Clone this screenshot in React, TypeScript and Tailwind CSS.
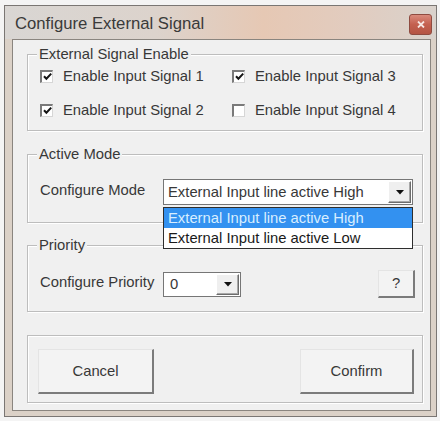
import React from "react";

// Small classic Windows-style controls for the dialog.

const DownArrow = () => (
  <svg width="8" height="5" viewBox="0 0 8 5" aria-hidden="true">
    <path d="M0 0H8L4 4.5Z" fill="#111" />
  </svg>
);

function CheckBox({ checked }: { checked: boolean }) {
  return (
    <span className="w-[13px] h-[13px] shrink-0 bg-white flex items-center justify-center border-t-2 border-l-2 border-r border-b border-t-[#7a7a7a] border-l-[#7a7a7a] border-r-[#d6d6d6] border-b-[#d6d6d6]">
      {checked && (
        <svg width="9" height="9" viewBox="0 0 9 9" aria-hidden="true">
          <path d="M1 4.3 L3.4 6.8 L8.2 1.6" fill="none" stroke="#151515" strokeWidth="2" />
        </svg>
      )}
    </span>
  );
}

function DropButton() {
  return (
    <span className="h-full w-[23px] shrink-0 flex items-center justify-center bg-[#efefef] border-t border-l border-r border-b border-t-white border-l-white border-r-[#6c6c6c] border-b-[#6c6c6c] shadow-[inset_-1px_-1px_0_#a8a8a8]">
      <DownArrow />
    </span>
  );
}

function Group({
  legend,
  className,
  children,
}: {
  legend?: string;
  className: string;
  children: React.ReactNode;
}) {
  return (
    <div
      className={`relative border border-[#bdbdbd] shadow-[inset_1px_1px_0_#ffffff,1px_1px_0_#ffffff] ${className}`}
    >
      {legend && (
        <span className="absolute left-[9px] -top-[10px] bg-[#f0f0f0] px-[2px] leading-[18px] whitespace-nowrap">
          {legend}
        </span>
      )}
      {children}
    </div>
  );
}

function CheckRow({ label, checked }: { label: string; checked: boolean }) {
  return (
    <div className="flex items-center gap-[10px] h-[20px] leading-[20px] whitespace-nowrap">
      <CheckBox checked={checked} />
      <span>{label}</span>
    </div>
  );
}

function PushButton({ label, className }: { label: string; className: string }) {
  return (
    <button
      className={`flex items-center justify-center bg-[#f3f3f3] border-t border-l border-r-2 border-b-2 border-t-[#e4e4e4] border-l-[#e4e4e4] border-r-[#7b7b7b] border-b-[#7b7b7b] text-[#383838] ${className}`}
    >
      {label}
    </button>
  );
}

export default function App() {
  return (
    <div className="w-[440px] h-[421px] overflow-hidden bg-[#f4f4f4] pt-[5px] pl-[4px] font-['Liberation_Sans',Arial,sans-serif] text-[14.8px] text-[#383838]">
      {/* window frame */}
      <div className="w-[433px] h-[412px] border border-[#7a7673] bg-[#dbd1c7] flex flex-col">
        {/* title bar */}
        <div className="h-[33px] shrink-0 flex items-center justify-between pl-[10px] pr-[4px] pt-[3px] bg-[linear-gradient(90deg,#d9d6d3_0%,#dcd3cc_35%,#e6c8b4_60%,#e2ccbf_80%,#d9d2cc_100%)]">
          <span className="text-[16.7px] leading-[20px] text-[#3a3a3a] whitespace-nowrap">
            Configure External Signal
          </span>
          <span className="w-[23px] h-[21px] rounded-[3px] border border-[#8f4b40] bg-[linear-gradient(180deg,#d98a7c_0%,#c4604f_50%,#b45443_100%)] flex items-center justify-center">
            <svg width="8" height="7" viewBox="0 0 8 7" aria-hidden="true">
              <path d="M1 0.5 L7 6.5 M7 0.5 L1 6.5" stroke="#f6e6e2" strokeWidth="1.8" />
            </svg>
          </span>
        </div>

        {/* client area */}
        <div className="ml-[7px] w-[419px] h-[372px] border border-[#8a857f] bg-[#f0f0f0] flex flex-col">
          {/* External Signal Enable */}
          <Group legend="External Signal Enable" className="mt-[14px] ml-[14px] w-[396px] h-[77px] pt-[11px] pl-[12px]">
            <div className="grid grid-cols-[192px_1fr] gap-y-[14px]">
              <CheckRow label="Enable Input Signal 1" checked />
              <CheckRow label="Enable Input Signal 3" checked />
              <CheckRow label="Enable Input Signal 2" checked />
              <CheckRow label="Enable Input Signal 4" checked={false} />
            </div>
          </Group>

          {/* Active Mode */}
          <Group legend="Active Mode" className="mt-[23px] ml-[14px] w-[396px] h-[69px] pt-[24px] pl-[12px] z-10">
            <div className="flex items-center">
              <span className="w-[123px] -mt-[3px] whitespace-nowrap">Configure Mode</span>
              <div className="relative h-[26px] w-[250px] bg-white border border-[#767676] p-[1px] flex">
                <span className="flex-1 flex items-center pl-[3px] whitespace-nowrap">
                  External Input line active High
                </span>
                <DropButton />
                {/* open list */}
                <div className="absolute -left-px top-[27px] w-[250px] bg-white border border-[#2e2e2e] flex flex-col">
                  <span className="h-[20px] leading-[20px] pl-[4px] bg-[#3391f0] text-[#d8eeff] whitespace-nowrap">
                    External Input line active High
                  </span>
                  <span className="h-[20px] leading-[20px] pl-[4px] text-[#1a1a1a] whitespace-nowrap">
                    External Input line active Low
                  </span>
                </div>
              </div>
            </div>
          </Group>

          {/* Priority */}
          <Group legend="Priority" className="mt-[22px] ml-[14px] w-[396px] h-[67px] pt-[24px] pl-[12px] pr-[7px]">
            <div className="flex items-center h-[28px]">
              <span className="w-[123px] -mt-[4px] whitespace-nowrap">Configure Priority</span>
              <div className="h-[25px] w-[78px] bg-white border border-[#767676] p-[1px] flex">
                <span className="flex-1 flex items-center pl-[5px]">0</span>
                <DropButton />
              </div>
              <div className="flex-1" />
              <PushButton label="?" className="w-[37px] h-[28px]" />
            </div>
          </Group>

          {/* actions */}
          <Group className="mt-[23px] ml-[14px] w-[396px] h-[68px] pt-[13px] pl-[10px] pr-[8px]">
            <div className="flex justify-between">
              <PushButton label="Cancel" className="w-[116px] h-[45px]" />
              <PushButton label="Confirm" className="w-[114px] h-[45px]" />
            </div>
          </Group>
        </div>
      </div>
    </div>
  );
}
